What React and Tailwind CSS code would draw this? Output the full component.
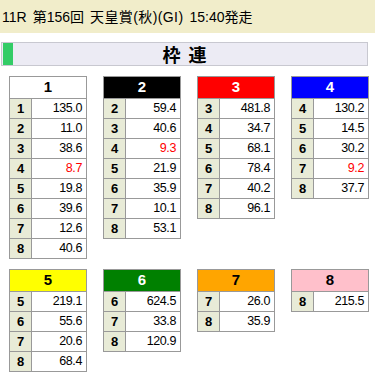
const frames = [
  { no: 1, bg: "bg-white", fg: "text-black", rows: [["1", "135.0"], ["2", "11.0"], ["3", "38.6"], ["4", "8.7", true], ["5", "19.8"], ["6", "39.6"], ["7", "12.6"], ["8", "40.6"]] },
  { no: 2, bg: "bg-black", fg: "text-white", rows: [["2", "59.4"], ["3", "40.6"], ["4", "9.3", true], ["5", "21.9"], ["6", "35.9"], ["7", "10.1"], ["8", "53.1"]] },
  { no: 3, bg: "bg-[#ff0000]", fg: "text-white", rows: [["3", "481.8"], ["4", "34.7"], ["5", "68.1"], ["6", "78.4"], ["7", "40.2"], ["8", "96.1"]] },
  { no: 4, bg: "bg-[#0000ff]", fg: "text-white", rows: [["4", "130.2"], ["5", "14.5"], ["6", "30.2"], ["7", "9.2", true], ["8", "37.7"]] },
  { no: 5, bg: "bg-[#ffff00]", fg: "text-black", rows: [["5", "219.1"], ["6", "55.6"], ["7", "20.6"], ["8", "68.4"]] },
  { no: 6, bg: "bg-[#008000]", fg: "text-white", rows: [["6", "624.5"], ["7", "33.8"], ["8", "120.9"]] },
  { no: 7, bg: "bg-[#ffa500]", fg: "text-black", rows: [["7", "26.0"], ["8", "35.9"]] },
  { no: 8, bg: "bg-[#ffc0cb]", fg: "text-black", rows: [["8", "215.5"]] },
];

function FrameTable({ frame }) {
  return (
    <div className="w-[78px] border border-[#999999] bg-white">
      {/* frame header */}
      <div className={`h-[21px] flex items-center justify-center text-[15px] font-bold ${frame.bg} ${frame.fg}`}>
        {frame.no}
      </div>
      {frame.rows.map(([pair, odds, hot]) => (
        <div key={pair} className="h-[20px] flex border-t border-[#999999]">
          <div className="w-[22px] border-r border-[#999999] bg-[#e8ebd7] flex items-center justify-center text-[13px] font-bold text-black">
            {pair}
          </div>
          <div className={`flex-1 flex items-center justify-end pr-[4px] text-[12.5px] tracking-[-0.4px] ${hot ? "text-[#ff0000]" : "text-black"}`}>
            {odds}
          </div>
        </div>
      ))}
    </div>
  );
}

export default function App() {
  return (
    <div className="w-[375px] h-[374px] bg-white overflow-hidden font-['Liberation_Sans','Noto_Sans_CJK_JP',sans-serif]">
      {/* race title */}
      <div className="h-[33px] bg-[#f1edca] flex items-center gap-[6px] pl-[2px] pt-[1px] text-[14px] text-black">
        <span>11R</span>
        <span>第156回</span>
        <span className="tracking-[0.4px]">天皇賞(秋)(GI)</span>
        <span>15:40発走</span>
      </div>

      {/* bet type bar */}
      <div className="mt-[9px] ml-[1px] w-[367px] h-[24px] border border-[#c8c8d0] bg-[#ecebf4] flex items-stretch">
        <div className="w-[10px] ml-[1px] bg-[#33cc66]"></div>
        <div className="flex-1 flex items-center justify-center gap-[8px] text-[18px] font-bold text-black pr-[11px] font-['Noto_Sans_CJK_JP',sans-serif]">
          <span>枠</span>
          <span>連</span>
        </div>
      </div>

      {/* odds grid */}
      <div className="pl-[9px] pt-[10px] grid grid-cols-[78px_78px_78px_78px] gap-x-[16px] gap-y-[10px] items-start">
        {frames.map((f) => (
          <FrameTable key={f.no} frame={f} />
        ))}
      </div>
    </div>
  );
}
